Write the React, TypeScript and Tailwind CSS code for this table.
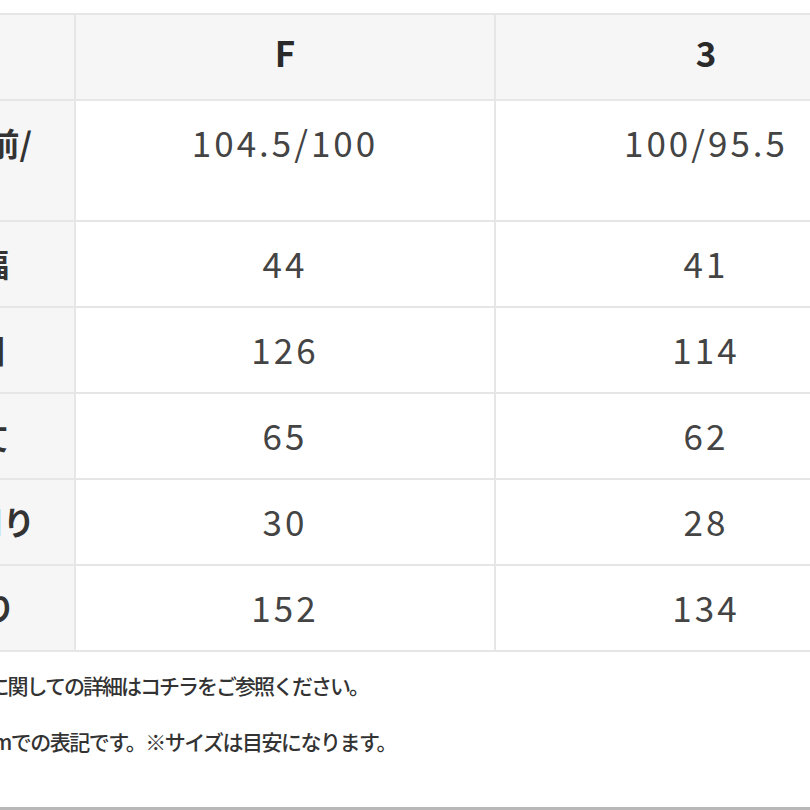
import React from 'react';

const rows = [
  { label: '着丈 前/', pr: 'pr-[42px]', f: '104.5/100', s: '100/95.5', tall: true },
  { label: '肩幅', pr: 'pr-[65px]', f: '44', s: '41' },
  { label: '身囲', pr: 'pr-[69px]', f: '126', s: '114' },
  { label: '袖丈', pr: 'pr-[66px]', f: '65', s: '62' },
  { label: '袖周り', pr: 'pr-[39px]', f: '30', s: '28' },
  { label: '裾周り', pr: 'pr-[59px]', f: '152', s: '134' },
];

const font = { fontFamily: '"Noto Sans CJK JP", "Noto Sans", sans-serif' };

export default function App() {
  return (
    <div className="w-[810px] h-[810px] overflow-hidden bg-white flex flex-col" style={font}>
      {/* Size table */}
      <div className="mt-[13px] w-[916px] border-t-2 border-[#e6e6e6]">
        {/* Header */}
        <div className="grid grid-cols-[76px_420px_420px] h-[86px] border-b-2 border-[#e6e6e6] bg-[#f6f6f6]">
          <div className="border-r-2 border-[#e6e6e6]" />
          <div className="border-r-2 border-[#e6e6e6] flex items-center justify-center pb-[9px] text-[35px] font-bold text-[#2a2a2a]">F</div>
          <div className="flex items-center justify-center pb-[9px] text-[35px] font-bold text-[#2a2a2a]">3</div>
        </div>

        {rows.map((r) => (
          <div
            key={r.label}
            className={`grid grid-cols-[76px_420px_420px] border-b-2 border-[#e6e6e6] ${r.tall ? 'h-[121px]' : 'h-[86px]'}`}
          >
            <div className={`border-r-2 border-[#e6e6e6] bg-[#f6f6f6] overflow-hidden flex justify-end whitespace-nowrap text-[32px] font-bold text-[#333] ${r.pr} ${r.tall ? 'items-start pt-[23px]' : 'items-center pb-[2px]'}`}>
              <span className="leading-[36px]">{r.label}</span>
            </div>
            <div className={`border-r-2 border-[#e6e6e6] flex justify-center text-[35px] tracking-[3px] text-[#444] ${r.tall ? 'items-start pt-[23px]' : 'items-center pb-[3px]'}`}>
              <span className="leading-[36px]">{r.f}</span>
            </div>
            <div className={`flex justify-center text-[35px] tracking-[3px] text-[#444] ${r.tall ? 'items-start pt-[23px]' : 'items-center pb-[3px]'}`}>
              <span className="leading-[36px]">{r.s}</span>
            </div>
          </div>
        ))}
      </div>

      {/* Notes */}
      <div className="flex-1 pt-[5px] text-[21px] font-medium text-[#333] leading-[56px]">
        <div className="w-[368px] overflow-hidden flex justify-end whitespace-nowrap tracking-[-2px]">
          <span>※サイズに関しての詳細はコチラをご参照ください。</span>
        </div>
        <div className="w-[396px] overflow-hidden flex justify-end whitespace-nowrap tracking-[-1.5px]">
          <span>※サイズはcmでの表記です。※サイズは目安になります。</span>
        </div>
      </div>
      <div className="h-[3px] bg-[#b8b8b8]" />
    </div>
  );
}
